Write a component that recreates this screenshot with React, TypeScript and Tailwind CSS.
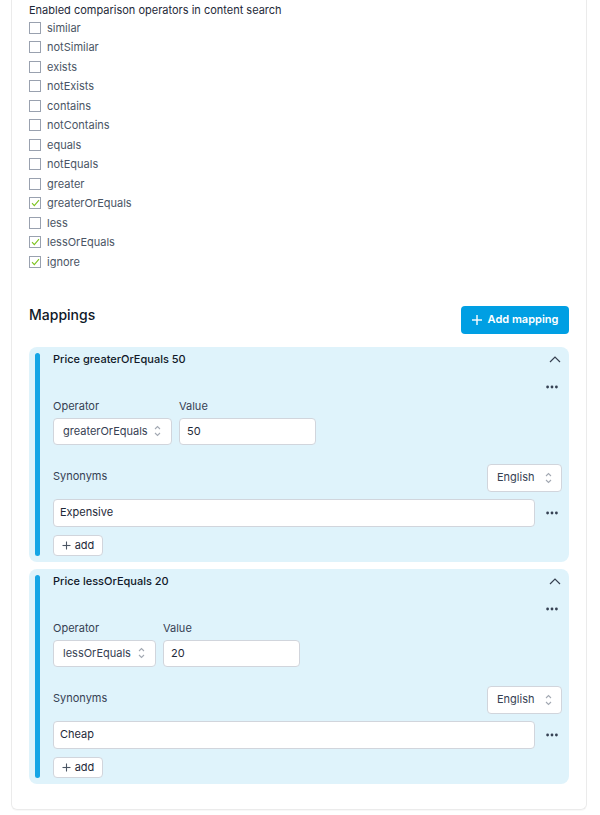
import React from 'react'

const operators: { name: string; checked: boolean }[] = [
  { name: 'similar', checked: false },
  { name: 'notSimilar', checked: false },
  { name: 'exists', checked: false },
  { name: 'notExists', checked: false },
  { name: 'contains', checked: false },
  { name: 'notContains', checked: false },
  { name: 'equals', checked: false },
  { name: 'notEquals', checked: false },
  { name: 'greater', checked: false },
  { name: 'greaterOrEquals', checked: true },
  { name: 'less', checked: false },
  { name: 'lessOrEquals', checked: true },
  { name: 'ignore', checked: true },
]

interface Mapping {
  title: string
  operator: string
  operatorWidth: string
  value: string
  synonym: string
}

const mappings: Mapping[] = [
  { title: 'Price greaterOrEquals 50', operator: 'greaterOrEquals', operatorWidth: 'w-[119px]', value: '50', synonym: 'Expensive' },
  { title: 'Price lessOrEquals 20', operator: 'lessOrEquals', operatorWidth: 'w-[103px]', value: '20', synonym: 'Cheap' },
]

function Dots() {
  return (
    <svg width="12" height="4" viewBox="0 0 12 4" className="text-gray-700">
      <circle cx="1.6" cy="2" r="1.4" fill="currentColor" />
      <circle cx="6" cy="2" r="1.4" fill="currentColor" />
      <circle cx="10.4" cy="2" r="1.4" fill="currentColor" />
    </svg>
  )
}

function UpDown() {
  return (
    <svg width="7" height="12" viewBox="0 0 7 12" fill="none" stroke="#a3a9b3" strokeWidth="1.1">
      <polyline points="1,4 3.5,1.5 6,4" />
      <polyline points="1,8 3.5,10.5 6,8" />
    </svg>
  )
}

function Checkbox({ checked }: { checked: boolean }) {
  return (
    <span className="w-[12px] h-[12px] border border-gray-400 bg-white flex items-center justify-center shrink-0">
      {checked && (
        <svg width="9" height="8" viewBox="0 0 9 8" fill="none" stroke="#7cc31f" strokeWidth="1.1">
          <polyline points="1,4.2 3.3,6.6 8,1.2" />
        </svg>
      )}
    </span>
  )
}

function MappingCard({ m }: { m: Mapping }) {
  return (
    <div className="rounded-lg bg-[#dff3fb] flex py-[6px] pl-[6px] pr-[7px]">
      <div className="w-[5px] rounded-full bg-[#16a5e5] shrink-0" />
      <div className="flex-1 ml-[13px]">
        {/* header */}
        <div className="h-[14px] flex items-center justify-between">
          <span className="text-[11px] font-medium text-gray-900">{m.title}</span>
          <svg width="12" height="7" viewBox="0 0 12 7" fill="none" stroke="#374151" strokeWidth="1.2" className="mr-[1px]">
            <polyline points="1,6 6,1 11,6" />
          </svg>
        </div>
        <div className="mt-[13px] h-[14px] flex items-center justify-end pr-[4px]">
          <Dots />
        </div>

        {/* operator / value */}
        <div className="mt-[6px] flex gap-[7px]">
          <div>
            <div className="text-[11px] leading-[12px] text-gray-700">Operator</div>
            <div className={`mt-[6px] h-[27px] ${m.operatorWidth} bg-white border border-gray-300 rounded-[4px] flex items-center justify-between pl-[9px] pr-[10px] text-[11px] text-gray-700`}>
              <span>{m.operator}</span>
              <UpDown />
            </div>
          </div>
          <div>
            <div className="text-[11px] leading-[12px] text-gray-700">Value</div>
            <div className="mt-[6px] h-[27px] w-[137px] bg-white border border-gray-300 rounded-[4px] flex items-center px-[7px] text-[11px] text-gray-800">
              {m.value}
            </div>
          </div>
        </div>

        {/* synonyms */}
        <div className="mt-[19px] h-[28px] flex items-center justify-between">
          <span className="text-[11px] text-gray-700 -mt-[2px]">Synonyms</span>
          <div className="h-[28px] w-[75px] bg-white border border-gray-300 rounded-[4px] flex items-center justify-between pl-[9px] pr-[9px] text-[11px] text-gray-700">
            <span>English</span>
            <UpDown />
          </div>
        </div>
        <div className="mt-[7px] h-[28px] flex items-center">
          <div className="flex-1 h-[28px] bg-white border border-gray-300 rounded-[4px] flex items-center px-[6px] text-[11px] text-gray-800">
            {m.synonym}
          </div>
          <div className="w-[27px] flex justify-end pr-[4px]">
            <Dots />
          </div>
        </div>
        <button className="mt-[8px] h-[21px] w-[50px] bg-white border border-gray-300 rounded-[4px] flex items-center justify-center gap-[4px] text-[11px] text-gray-800">
          <svg width="9" height="9" viewBox="0 0 9 9" stroke="#4b5563" strokeWidth="1.1">
            <line x1="4.5" y1="0.5" x2="4.5" y2="8.5" />
            <line x1="0.5" y1="4.5" x2="8.5" y2="4.5" />
          </svg>
          add
        </button>
      </div>
    </div>
  )
}

export default function App() {
  return (
    <div className="min-h-[815px] bg-white" style={{ fontFamily: 'Inter, "Liberation Sans", sans-serif' }}>
      <div className="ml-[11px] w-[576px] border-x border-b border-[#ebebeb] rounded-b-md px-[17px] pb-[25px] shadow-[0_1px_1px_rgba(0,0,0,0.03)]">
        <div className="pt-[3px] text-[11px] leading-[14px] text-gray-800">
          Enabled comparison operators in content search
        </div>
        <div className="mt-[1px]">
          {operators.map((op) => (
            <div key={op.name} className="h-[19.5px] flex items-center gap-[6px]">
              <Checkbox checked={op.checked} />
              <span className="text-[11px] text-gray-600">{op.name}</span>
            </div>
          ))}
        </div>

        <div className="mt-[34px] flex items-center justify-between">
          <h2 className="text-[14px] font-medium text-gray-900 -mt-[10px]">Mappings</h2>
          <button className="h-[28px] w-[108px] rounded-[4px] bg-[#009fe3] text-white text-[11px] font-semibold flex items-center justify-center gap-[6px]">
            <svg width="10" height="10" viewBox="0 0 10 10" stroke="white" strokeWidth="1.4">
              <line x1="5" y1="0" x2="5" y2="10" />
              <line x1="0" y1="5" x2="10" y2="5" />
            </svg>
            Add mapping
          </button>
        </div>

        <div className="mt-[13px] flex flex-col gap-[7px]">
          {mappings.map((m) => (
            <MappingCard key={m.title} m={m} />
          ))}
        </div>
      </div>
    </div>
  )
}
